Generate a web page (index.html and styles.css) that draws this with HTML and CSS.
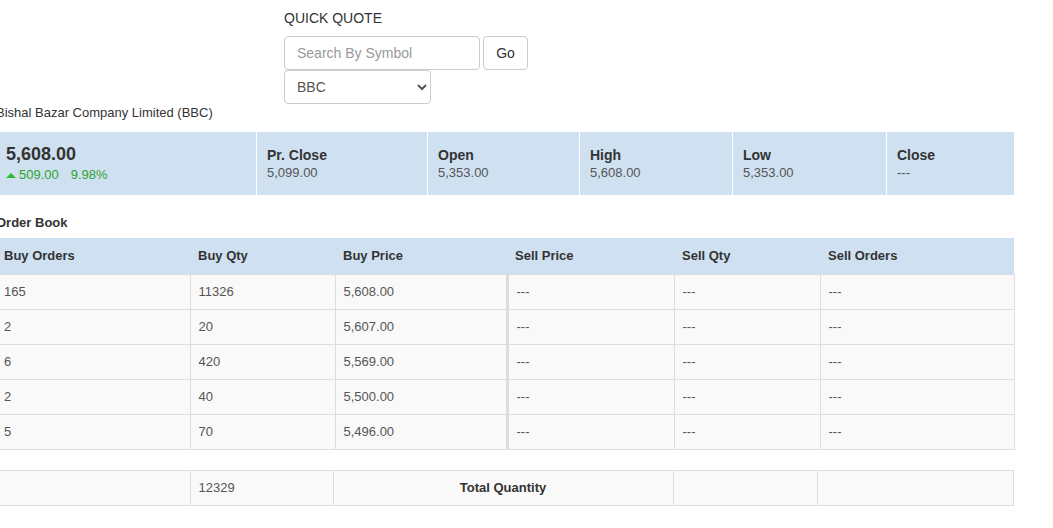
FILE: index.html
```html
<!DOCTYPE html>
<html lang="en">
<head>
    <meta charset="UTF-8">
    <meta name="viewport" content="width=device-width, initial-scale=1.0">
    <title>BBC - Quick Quote</title>
    <link rel="stylesheet" href="styles.css">
</head>
<body>
    <div class="page">
        <div class="quick-quote">
            <label class="qq-title" for="symbol">QUICK QUOTE</label>
            <div class="qq-search">
                <input id="symbol" type="text" placeholder="Search By Symbol">
                <button type="button">Go</button>
            </div>
            <select class="qq-select">
                <option>BBC</option>
            </select>
        </div>

        <p class="company">Bishal Bazar Company Limited (BBC)</p>

        <div class="summary">
            <div class="cell cell-main">
                <div class="ltp">5,608.00</div>
                <div class="change">
                    <svg width="10" height="5" viewBox="0 0 10 5"><polygon points="0,5 5,0 10,5" fill="#2ebd2e"/></svg>
                    <span>509.00</span>
                    <span class="pct">9.98%</span>
                </div>
            </div>
            <div class="cell w2">
                <div class="lbl">Pr. Close</div>
                <div class="val">5,099.00</div>
            </div>
            <div class="cell w3">
                <div class="lbl">Open</div>
                <div class="val">5,353.00</div>
            </div>
            <div class="cell w4">
                <div class="lbl">High</div>
                <div class="val">5,608.00</div>
            </div>
            <div class="cell w5">
                <div class="lbl">Low</div>
                <div class="val">5,353.00</div>
            </div>
            <div class="cell w6">
                <div class="lbl">Close</div>
                <div class="val">---</div>
            </div>
        </div>

        <h4 class="section-title">Order Book</h4>
        <table class="orders">
            <colgroup>
                <col style="width:194px"><col style="width:145px"><col style="width:172px">
                <col style="width:167px"><col style="width:146px"><col style="width:194px">
            </colgroup>
            <thead>
                <tr>
                    <th>Buy Orders</th>
                    <th>Buy Qty</th>
                    <th>Buy Price</th>
                    <th>Sell Price</th>
                    <th>Sell Qty</th>
                    <th>Sell Orders</th>
                </tr>
            </thead>
            <tbody>
                <tr><td>165</td><td>11326</td><td>5,608.00</td><td class="sell">---</td><td>---</td><td>---</td></tr>
                <tr><td>2</td><td>20</td><td>5,607.00</td><td class="sell">---</td><td>---</td><td>---</td></tr>
                <tr><td>6</td><td>420</td><td>5,569.00</td><td class="sell">---</td><td>---</td><td>---</td></tr>
                <tr><td>2</td><td>40</td><td>5,500.00</td><td class="sell">---</td><td>---</td><td>---</td></tr>
                <tr><td>5</td><td>70</td><td>5,496.00</td><td class="sell">---</td><td>---</td><td>---</td></tr>
            </tbody>
        </table>

        <table class="totals">
            <colgroup>
                <col style="width:194px"><col style="width:143px"><col style="width:340px">
                <col style="width:144px"><col style="width:196px">
            </colgroup>
            <tr>
                <td></td>
                <td>12329</td>
                <td class="total-lbl">Total Quantity</td>
                <td></td>
                <td></td>
            </tr>
        </table>
    </div>
</body>
</html>
```

FILE: styles.css
```css
body {
    margin: 0;
    padding: 0;
    font-family: "Liberation Sans", Arial, sans-serif;
    color: #333;
    background: #fff;
    overflow-x: hidden;
}
.page {
    margin-left: -4px;
    width: 1018px;
}

/* quick quote */
.quick-quote {
    margin-left: 288px;
    padding-top: 8px;
}
.qq-title {
    display: block;
    font-size: 14px;
    line-height: 20px;
    color: #333;
    margin-bottom: 8px;
}
.qq-search {
    display: flex;
    gap: 3px;
}
.qq-search input {
    width: 196px;
    height: 34px;
    box-sizing: border-box;
    border: 1px solid #ccc;
    border-radius: 4px;
    padding: 0 12px;
    font-family: inherit;
    font-size: 14px;
    color: #555;
}
.qq-search input::placeholder {
    color: #999;
}
.qq-search button {
    width: 45px;
    height: 34px;
    box-sizing: border-box;
    background: #fff;
    border: 1px solid #ccc;
    border-radius: 4px;
    font-family: inherit;
    font-size: 14px;
    color: #333;
    cursor: pointer;
}
.qq-select {
    display: block;
    width: 147px;
    height: 34px;
    box-sizing: border-box;
    border: 1px solid #ccc;
    border-radius: 4px;
    padding: 0 8px;
    background: #fff;
    font-family: inherit;
    font-size: 14px;
    color: #555;
}

.company {
    margin: 0 0 10px 0;
    font-size: 13px;
    line-height: 18px;
    color: #333;
}

/* summary bar */
.summary {
    display: flex;
    height: 63px;
    background: #cfe0f1;
}
.cell {
    box-sizing: border-box;
    padding: 14px 10px 0 10px;
    border-left: 1px solid #fff;
}
.cell-main {
    width: 260px;
    border-left: none;
    padding-top: 12px;
}
.w2 { width: 171px; }
.w3 { width: 152px; }
.w4 { width: 153px; }
.w5 { width: 154px; }
.w6 { width: 128px; }
.ltp {
    font-size: 18px;
    font-weight: bold;
    line-height: 20px;
    color: #333;
}
.change {
    margin-top: 3px;
    font-size: 13px;
    line-height: 16px;
    color: #2ea42e;
    display: flex;
    align-items: center;
    gap: 3px;
}
.change .pct {
    margin-left: 9px;
}
.lbl {
    font-size: 14px;
    font-weight: bold;
    line-height: 18px;
    color: #333;
}
.val {
    margin-top: 1px;
    font-size: 13px;
    line-height: 16px;
    color: #555;
}

.section-title {
    margin: 19px 0 6px 0;
    font-size: 13px;
    line-height: 18px;
    font-weight: bold;
    color: #333;
}

/* order book */
table {
    border-collapse: collapse;
    table-layout: fixed;
    width: 1018px;
}
.orders th {
    background: #cfe0f1;
    height: 36px;
    box-sizing: border-box;
    padding: 0 8px;
    text-align: left;
    font-size: 13px;
    color: #333;
}
.orders td, .totals td {
    height: 35px;
    box-sizing: border-box;
    padding: 0 8px;
    background: #f9f9f9;
    border: 1px solid #ddd;
    font-size: 13px;
    color: #555;
}
.orders td:first-child, .totals td:first-child {
    border-left: none;
}
.orders td.sell {
    border-left: 3px solid #ddd;
}
.totals {
    margin-top: 20px;
    width: 1017px;
}
.totals td.total-lbl {
    text-align: center;
    font-weight: bold;
    font-size: 13px;
    color: #333;
}
```
